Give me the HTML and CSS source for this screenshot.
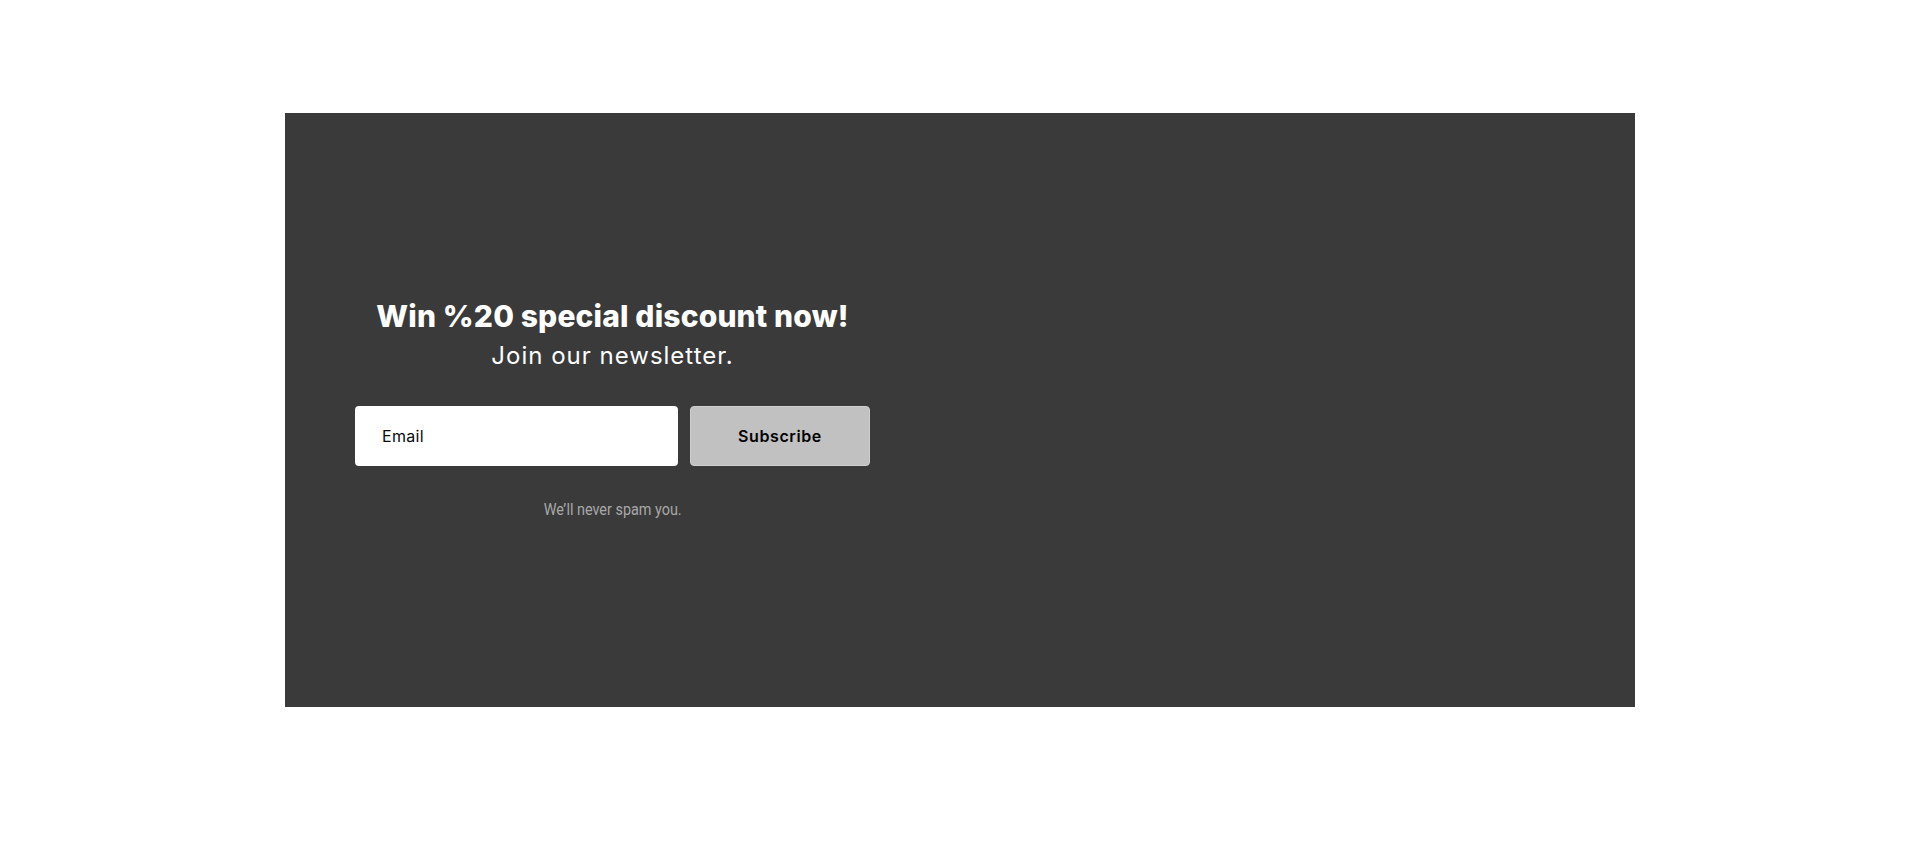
FILE: index.html
```html
<!DOCTYPE html>
<html lang="en">
<head>
<meta charset="utf-8">
<title>Newsletter</title>
<link rel="stylesheet" href="styles.css">
</head>
<body>
<div class="page">
  <section class="banner">
    <div class="newsletter">
      <h2 class="title">Win %20 special discount now!</h2>
      <p class="subtitle">Join our newsletter.</p>
      <form class="form">
        <input class="email" type="email" placeholder="Email">
        <button class="subscribe" type="button">Subscribe</button>
      </form>
      <p class="note"><span>We’ll never spam you.</span></p>
    </div>
  </section>
</div>
</body>
</html>
```

FILE: styles.css
```css
html, body {
  margin: 0;
  padding: 0;
  background: #ffffff;
}

.page {
  padding-top: 113px;
}

.banner {
  width: 1350px;
  height: 594px;
  margin: 0 auto;
  background: #3a3a3a;
  display: flex;
  align-items: center;
}

.newsletter {
  width: 515px;
  margin-left: 70px;
  margin-bottom: 2px;
  text-align: center;
  font-family: Inter, "Open Sans", sans-serif;
}

.title {
  margin: 0;
  font-size: 30px;
  line-height: 36px;
  font-weight: 800;
  color: #ffffff;
  letter-spacing: 0.15px;
}

.subtitle {
  margin: 7px 0 0;
  font-size: 24px;
  line-height: 30px;
  font-weight: 400;
  color: #ffffff;
  letter-spacing: 1px;
}

.form {
  margin-top: 35px;
  display: flex;
  gap: 12px;
}

.email {
  width: 323px;
  height: 60px;
  box-sizing: border-box;
  border: none;
  border-radius: 4px;
  background: #ffffff;
  padding: 0 0 0 27px;
  font-family: Inter, "Open Sans", sans-serif;
  font-size: 16px;
  font-weight: 400;
  color: #000;
  letter-spacing: 0.3px;
  outline: none;
}

.email::placeholder {
  color: #0a0a0a;
  opacity: 1;
}

.subscribe {
  width: 180px;
  height: 60px;
  box-sizing: border-box;
  border: 1px solid #cfcfcf;
  border-radius: 4px;
  background: #c1c1c1;
  font-family: Inter, "Open Sans", sans-serif;
  font-size: 16px;
  font-weight: 600;
  color: #000;
  letter-spacing: 0.6px;
  padding: 0;
}

.note {
  margin: 34px 0 0;
  font-family: Roboto, "Liberation Sans", sans-serif;
  font-size: 16px;
  line-height: 20px;
  color: #a8a8a8;
}

.note span {
  display: inline-block;
  transform: scaleX(0.9);
}
```
